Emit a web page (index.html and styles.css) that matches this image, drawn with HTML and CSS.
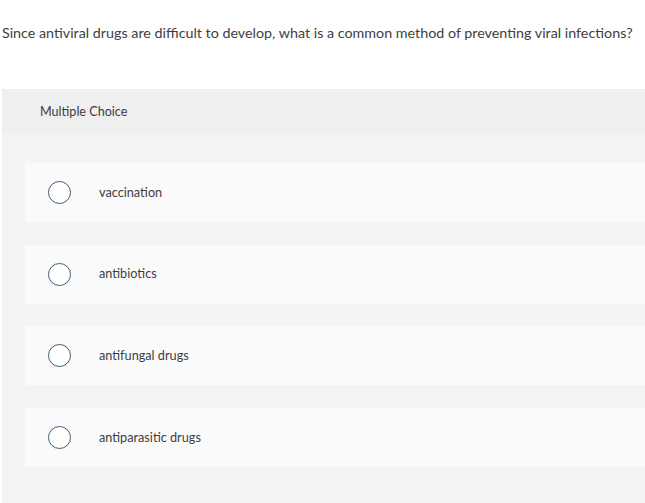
FILE: index.html
```html
<!DOCTYPE html>
<html>
<head>
<meta charset="utf-8">
<link rel="stylesheet" href="styles.css">
</head>
<body>
<p class="question">Since antiviral drugs are difficult to develop, what is a common method of preventing viral infections?</p>
<div class="panel">
  <div class="panel-header">Multiple Choice</div>
  <div class="options">
    <div class="option"><span class="radio"></span><span class="label">vaccination</span></div>
    <div class="option"><span class="radio"></span><span class="label">antibiotics</span></div>
    <div class="option"><span class="radio"></span><span class="label">antifungal drugs</span></div>
    <div class="option"><span class="radio"></span><span class="label">antiparasitic drugs</span></div>
  </div>
</div>
</body>
</html>
```
FILE: styles.css
```css
html, body {
  margin: 0;
  padding: 0;
  background: #ffffff;
  overflow: hidden;
}
body {
  font-family: Lato, "Open Sans", sans-serif;
  color: #3d3d3d;
}
.question {
  margin: 0;
  padding: 23px 0 0 2px;
  font-size: 14.3px;
  line-height: 20px;
  white-space: nowrap;
  color: #404040;
}
.panel {
  margin: 46px 0 0 2px;
  width: 660px;
  background: #f4f4f4;
  height: 420px;
}
.panel-header {
  background: #efefef;
  height: 44px;
  display: flex;
  align-items: center;
  padding-left: 38px;
  font-size: 12.6px;
  color: #3d3d3d;
}
.options {
  display: flex;
  flex-direction: column;
  gap: 22.7px;
  padding: 30px 0 0 23px;
}
.option {
  background: #fafafa;
  height: 59px;
  display: flex;
  align-items: center;
}
.radio {
  width: 21px;
  height: 21px;
  border: 1.5px solid #3f5b74;
  border-radius: 50%;
  margin-left: 23px;
  background: #fff;
  flex: none;
}
.label {
  margin-left: 28px;
  padding-bottom: 2px;
  font-size: 12.7px;
  color: #3d3d3d;
}
```
